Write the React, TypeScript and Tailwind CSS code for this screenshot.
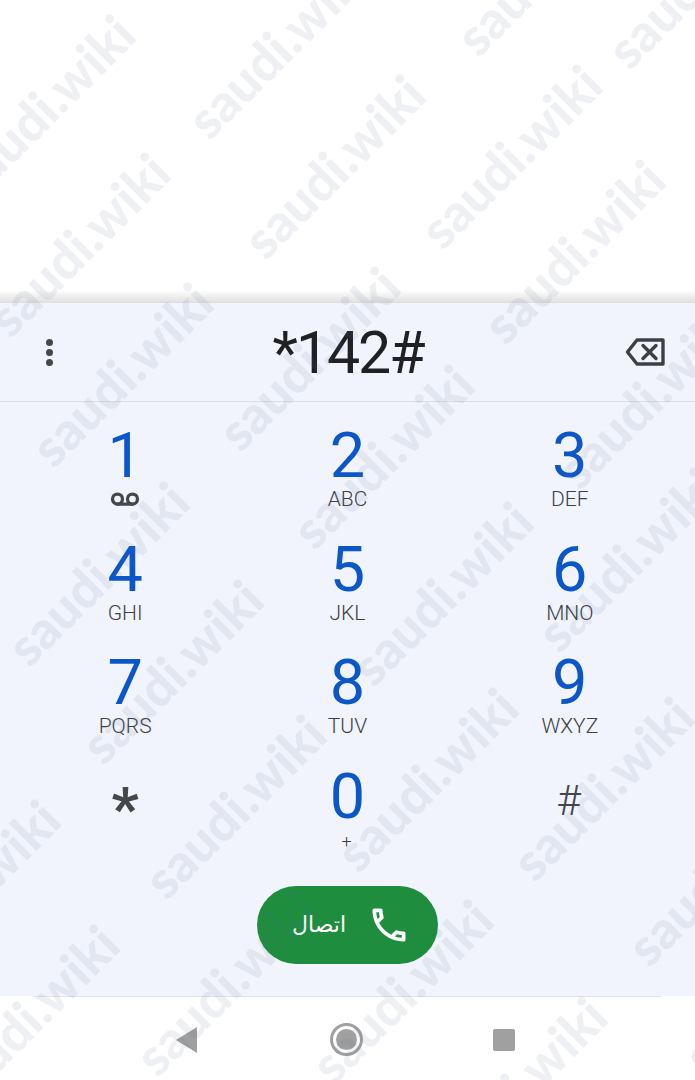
import { Voicemail } from 'lucide-react';

const keys = [
  { digit: '1', sub: '' },
  { digit: '2', sub: 'ABC' },
  { digit: '3', sub: 'DEF' },
  { digit: '4', sub: 'GHI' },
  { digit: '5', sub: 'JKL' },
  { digit: '6', sub: 'MNO' },
  { digit: '7', sub: 'PQRS' },
  { digit: '8', sub: 'TUV' },
  { digit: '9', sub: 'WXYZ' },
];

// centre of each watermark on the page
const watermarks = [
  [43, 106], [277, 46], [333, 166], [546, -37], [697, -24], [510, 156],
  [78, 244], [573, 251], [121, 374], [308, 358], [382, 456], [97, 573],
  [171, 671], [441, 593], [627, 559], [647, 396], [234, 806], [426, 779],
  [602, 788], [-32, 891], [401, 991], [27, 1016], [225, 983], [717, 873],
  [515, 1088], [773, 981],
];

function Backspace() {
  return (
    <svg width="42" height="30" viewBox="0 0 42 30" fill="none" stroke="#3c4043" strokeWidth="3.4" strokeLinejoin="round">
      <path d="M12 3H38V27H12L2.5 15Z" />
      <path d="M18 8.500L31 21.500M31 8.500L18 21.500" strokeLinecap="round" />
    </svg>
  );
}

function PhoneIcon() {
  return (
    <svg width="44" height="44" viewBox="0 0 24 24" fill="white">
      <path d="M6.54 5c.06.89.21 1.76.45 2.59l-1.2 1.2c-.41-1.2-.67-2.47-.76-3.79h1.51m9.86 12.02c.85.24 1.72.39 2.6.45v1.49c-1.32-.09-2.59-.35-3.8-.75l1.2-1.19M7.5 3H4c-.55 0-1 .45-1 1 0 9.39 7.61 17 17 17 .55 0 1-.45 1-1v-3.49c0-.55-.45-1-1-1-1.24 0-2.45-.2-3.57-.57-.1-.04-.21-.05-.31-.05-.26 0-.51.1-.71.29l-2.2 2.2c-2.83-1.45-5.15-3.76-6.59-6.59l2.2-2.2c.28-.28.36-.67.25-1.02C8.7 6.45 8.5 5.25 8.500 4c0-.55-.45-1-1-1z" />
    </svg>
  );
}

export default function App() {
  return (
    <div className="relative h-[1080px] w-[695px] overflow-hidden bg-white font-['Roboto',sans-serif]">
      {/* Empty call log area */}
      <div className="h-[290px] bg-white" />
      <div className="h-[13px] bg-gradient-to-b from-white to-[#dedede]" />

      <div className="h-[693px] bg-[#f1f4fc]">
        {/* Number field */}
        <div className="flex h-[99px] items-center border-b border-[#dcdee3] pl-[46px] pr-[28px]">
          <div className="flex flex-1 flex-col gap-[3px]">
            <span className="h-[7px] w-[7px] rounded-full bg-[#45474a]" />
            <span className="h-[7px] w-[7px] rounded-full bg-[#45474a]" />
            <span className="h-[7px] w-[7px] rounded-full bg-[#45474a]" />
          </div>
          <div className="ml-[-17px] text-[59px] leading-none tracking-[-0.035em] text-[#202124]">*142#</div>
          <div className="flex flex-1 justify-end">
            <Backspace />
          </div>
        </div>

        {/* Dial pad */}
        <div className="grid grid-cols-3 auto-rows-[113.7px] px-[14px] pt-[22px]">
          {keys.map((key) => (
            <div key={key.digit} className="flex flex-col items-center">
              <div className="h-[63px] text-[63px] font-normal leading-none text-[#0b57c9]">{key.digit}</div>
              {key.sub ? (
                <div className="mt-0 text-[21px] font-light leading-[24px] text-[#3c3f44]">{key.sub}</div>
              ) : (
                <Voicemail className="mt-[-3px] h-[30px] w-[30px] text-[#45474a]" strokeWidth={2.6} />
              )}
            </div>
          ))}
          <div className="flex justify-center pt-[14px]">
            <span className="text-[60px] font-bold leading-none text-[#45474a]">*</span>
          </div>
          <div className="flex flex-col items-center">
            <div className="h-[63px] text-[63px] font-normal leading-none text-[#0b57c9]">0</div>
            <div className="mt-[3px] pr-[2px] text-[18px] font-light leading-[22px] text-[#3c3f44]">+</div>
          </div>
          <div className="flex justify-center pt-[15px] pr-[2px]">
            <span className="text-[42px] font-light leading-none text-[#45474a]">#</span>
          </div>
        </div>

        {/* Call button */}
        <div className="flex justify-center pt-[7px]">
          <button
            dir="rtl"
            className="flex h-[78px] w-[181px] items-center justify-center gap-[21px] rounded-full bg-[#1e8e3e] pl-[8px] font-['DejaVu_Sans',sans-serif] text-[22px] text-white"
          >
            <PhoneIcon />
            <span>اتصال</span>
          </button>
        </div>
      </div>

      {/* Navigation bar */}
      <div className="mx-[33px] h-px bg-[#e4e4e8]" />
      <div className="flex h-[83px] items-center justify-center bg-white pr-[6px] pt-[2px]">
        <svg width="22" height="28" viewBox="0 0 22 28" fill="#a0a0a0">
          <path d="M22 1V27L1 14Z" />
        </svg>
        <div className="ml-[133px] flex h-[33px] w-[33px] items-center justify-center rounded-full border-[3px] border-[#a0a0a0]">
          <div className="h-[21px] w-[21px] rounded-full bg-[#a0a0a0]" />
        </div>
        <div className="ml-[130px] h-[22px] w-[22px] rounded-[2px] bg-[#a0a0a0]" />
      </div>

      {/* saudi.wiki watermark, lies over the whole page */}
      <div className="pointer-events-none absolute inset-0 font-['Lato',sans-serif]">
        {watermarks.map(([x, y]) => (
          <span
            key={`${x}-${y}`}
            className="absolute -translate-x-1/2 -translate-y-1/2 -rotate-45 whitespace-nowrap text-[52px] font-black leading-none text-[#5a6a96]/10"
            style={{ left: x, top: y }}
          >
            saudi.wiki
          </span>
        ))}
      </div>
    </div>
  );
}
